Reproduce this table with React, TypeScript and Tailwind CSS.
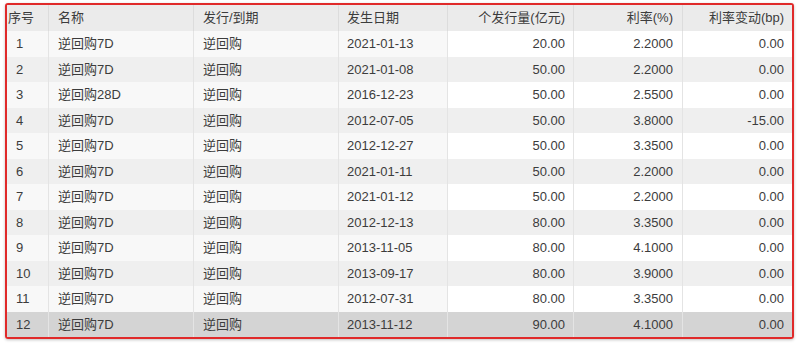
const rows = [
  ["1", "逆回购7D", "逆回购", "2021-01-13", "20.00", "2.2000", "0.00"],
  ["2", "逆回购7D", "逆回购", "2021-01-08", "50.00", "2.2000", "0.00"],
  ["3", "逆回购28D", "逆回购", "2016-12-23", "50.00", "2.5500", "0.00"],
  ["4", "逆回购7D", "逆回购", "2012-07-05", "50.00", "3.8000", "-15.00"],
  ["5", "逆回购7D", "逆回购", "2012-12-27", "50.00", "3.3500", "0.00"],
  ["6", "逆回购7D", "逆回购", "2021-01-11", "50.00", "2.2000", "0.00"],
  ["7", "逆回购7D", "逆回购", "2021-01-12", "50.00", "2.2000", "0.00"],
  ["8", "逆回购7D", "逆回购", "2012-12-13", "80.00", "3.3500", "0.00"],
  ["9", "逆回购7D", "逆回购", "2013-11-05", "80.00", "4.1000", "0.00"],
  ["10", "逆回购7D", "逆回购", "2013-09-17", "80.00", "3.9000", "0.00"],
  ["11", "逆回购7D", "逆回购", "2012-07-31", "80.00", "3.3500", "0.00"],
  ["12", "逆回购7D", "逆回购", "2013-11-12", "90.00", "4.1000", "0.00"],
];

const grid =
  "grid grid-cols-[41px_145px_145px_109px_126px_109px_110px]";

function App() {
  return (
    <div
      className="w-[800px] h-[346px] bg-white pt-[3px] pl-[5px]"
      style={{ fontFamily: '"Liberation Sans", Arial, "Noto Sans CJK SC", sans-serif' }}
    >
      <div className="w-[789px] h-[336px] border-2 border-[#e02a2a] rounded-[3px] shadow-[0_1px_3px_rgba(0,0,0,0.25)] overflow-hidden text-[13px] text-[#3c3c3c]">
        <div className={`${grid} h-[26px] bg-[#ebebeb] items-stretch`}>
          <div className="flex items-center pl-[1px] whitespace-nowrap">序号</div>
          <div className="flex items-center pl-[9px] border-l border-[#dcdcdc]">名称</div>
          <div className="flex items-center pl-[9px] border-l border-[#dcdcdc]">发行/到期</div>
          <div className="flex items-center pl-[8px] border-l border-[#dcdcdc]">发生日期</div>
          <div className="flex items-center justify-end pr-[8px] border-l border-[#dcdcdc]">个发行量(亿元)</div>
          <div className="flex items-center justify-end pr-[9px] border-l border-[#dcdcdc]">利率(%)</div>
          <div className="flex items-center justify-end pr-[8px] border-l border-[#dcdcdc]">利率变动(bp)</div>
        </div>
        {rows.map((r, i) => {
          const last = i === rows.length - 1;
          const even = i % 2 === 1;
          const left = last ? "bg-[#d4d4d4]" : even ? "bg-[#efefef]" : "bg-[#f8f8f8]";
          const right = last ? "bg-[#d4d4d4]" : even ? "bg-[#efefef]" : "bg-white";
          return (
            <div key={r[0]} className={`${grid} h-[25.5px]`}>
              <div className={`flex items-center pl-[9px] ${left}`}>{r[0]}</div>
              <div className={`flex items-center pl-[9px] border-l border-[#e4e4e4] ${left}`}>{r[1]}</div>
              <div className={`flex items-center pl-[9px] border-l border-[#e4e4e4] ${left}`}>{r[2]}</div>
              <div className={`flex items-center pl-[8px] border-l border-[#e4e4e4] ${left}`}>{r[3]}</div>
              <div className={`flex items-center justify-end pr-[8px] border-l border-[#e4e4e4] ${right}`}>{r[4]}</div>
              <div className={`flex items-center justify-end pr-[9px] border-l border-[#e4e4e4] ${right}`}>{r[5]}</div>
              <div className={`flex items-center justify-end pr-[8px] border-l border-[#e4e4e4] ${right}`}>{r[6]}</div>
            </div>
          );
        })}
      </div>
    </div>
  );
}

export default App;
